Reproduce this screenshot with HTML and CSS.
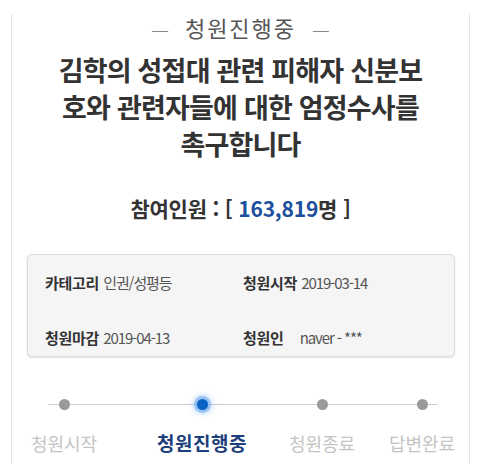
FILE: index.html
```html
<!DOCTYPE html>
<html lang="ko">
<head>
<meta charset="utf-8">
<link rel="stylesheet" href="styles.css">
</head>
<body>
<div class="card">
  <div class="status"><span class="dash">—</span>청원진행중<span class="dash">—</span></div>
  <h1 class="title">김학의 성접대 관련 피해자 신분보<br>호와 관련자들에 대한 엄정수사를<br>촉구합니다</h1>
  <div class="count">참여인원 : [ <span class="num">163,819</span>명 ]</div>
  <div class="info">
    <div class="item"><b>카테고리</b> <span class="val">인권/성평등</span></div>
    <div class="item"><b>청원시작</b> <span class="val">2019-03-14</span></div>
    <div class="item"><b>청원마감</b> <span class="val">2019-04-13</span></div>
    <div class="item"><b>청원인</b> <span class="val gap">naver - ***</span></div>
  </div>
  <div class="steps">
    <div class="step s1"><span class="dot"></span><span class="label">청원시작</span></div>
    <div class="step s2 active"><span class="dot"></span><span class="label">청원진행중</span></div>
    <div class="step s3"><span class="dot"></span><span class="label">청원종료</span></div>
    <div class="step s4"><span class="dot"></span><span class="label">답변완료</span></div>
  </div>
</div>
</body>
</html>
```
FILE: styles.css
```css
html, body {
  margin: 0;
  padding: 0;
  background: #fff;
}
body {
  font-family: "Noto Sans CJK KR", "Noto Sans", sans-serif;
  color: #333;
  overflow: hidden;
}
.card {
  margin: 0 10px 0 11px;
  height: 464px;
  border-left: 1px solid #e4e4e4;
  border-right: 1px solid #e4e4e4;
  box-sizing: border-box;
}
.status {
  margin-top: 14px;
  height: 26px;
  line-height: 26px;
  font-size: 22px;
  color: #555;
  text-align: center;
  letter-spacing: 2px;
}
.dash {
  display: inline-block;
  font-size: 20px;
  color: #888;
  margin: 0 16px;
  font-weight: 300;
  letter-spacing: 0;
}
.title {
  margin: 11px 0 0;
  font-size: 27px;
  line-height: 37px;
  font-weight: 700;
  letter-spacing: -0.8px;
  text-align: center;
  color: #333;
}
.count {
  margin-top: 31px;
  line-height: 30px;
  font-size: 21px;
  font-weight: 700;
  text-align: center;
  letter-spacing: -0.2px;
  color: #333;
}
.num {
  color: #1b4f9d;
}
.info {
  margin: 31px 14px 0 15px;
  height: 103px;
  box-sizing: border-box;
  padding: 18px 10px 0 17px;
  background: #f5f5f5;
  border: 1px solid #dcdcdc;
  border-radius: 5px;
  box-shadow: 0 1px 2px rgba(0,0,0,0.12);
  display: grid;
  grid-template-columns: 198px 1fr;
  row-gap: 27px;
}
.item {
  line-height: 20px;
  font-size: 15px;
  color: #555;
  white-space: nowrap;
}
.item b {
  color: #333;
  font-weight: 700;
  letter-spacing: -0.3px;
}
.val {
  letter-spacing: -1.1px;
}
.val.gap {
  margin-left: 12px;
}
.steps {
  position: relative;
  margin-top: 37px;
  padding-left: 7px;
  display: flex;
}
.steps::before {
  content: "";
  position: absolute;
  left: 36px;
  width: 390px;
  top: 10px;
  height: 1px;
  background: #cfcfcf;
}
.step {
  position: relative;
  width: 90px;
  display: flex;
  flex-direction: column;
  align-items: center;
}
.s2 { margin-left: 48px; }
.s3 { margin-left: 30px; }
.s4 { margin-left: 10px; }
.dot {
  margin-top: 5px;
  width: 11px;
  height: 11px;
  border-radius: 50%;
  background: #9a9a9a;
}
.active .dot {
  background: #0a62c6;
  box-shadow: 0 0 0 3px rgba(80,150,235,0.45), 0 0 4px 5px rgba(120,180,245,0.35);
}
.label {
  margin-top: 21px;
  line-height: 24px;
  font-size: 18px;
  color: #c4c4c4;
  letter-spacing: 0;
  white-space: nowrap;
}
.active .label {
  color: #1d3f7c;
  font-weight: 700;
  font-size: 19px;
  letter-spacing: 0.5px;
}
```
